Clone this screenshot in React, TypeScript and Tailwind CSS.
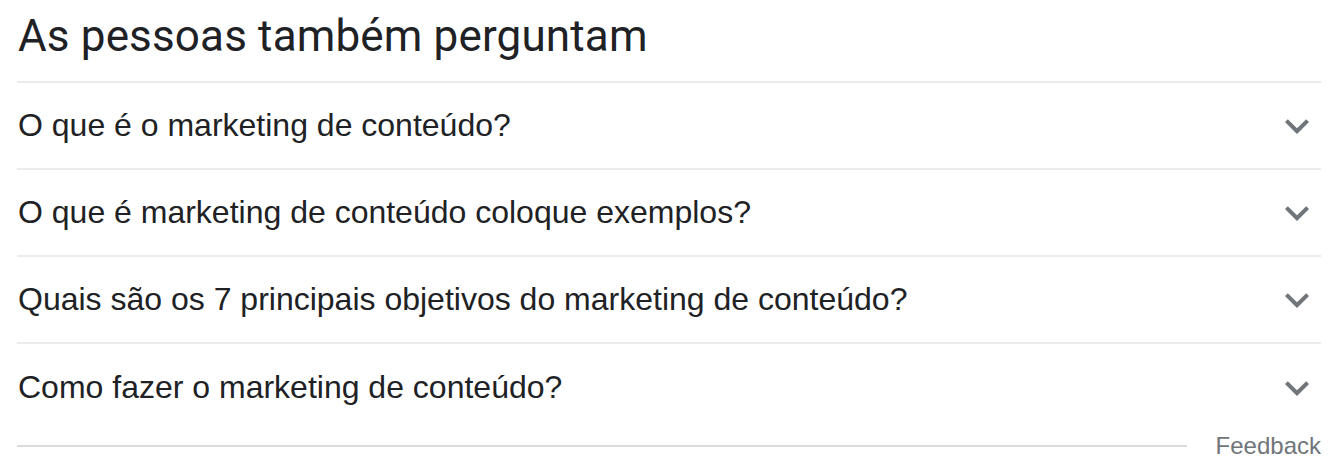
import React from "react";

const questions = [
  "O que é o marketing de conteúdo?",
  "O que é marketing de conteúdo coloque exemplos?",
  "Quais são os 7 principais objetivos do marketing de conteúdo?",
  "Como fazer o marketing de conteúdo?",
];

function Chevron() {
  return (
    <svg width="48" height="48" viewBox="0 0 24 24" className="fill-[#70757a] shrink-0">
      <path d="M16.59 8.59L12 13.17 7.41 8.59 6 10l6 6 6-6z" />
    </svg>
  );
}

export default function App() {
  return (
    <div className="bg-white w-[1340px] h-[471px] pl-[17px] pr-[19px] font-['Liberation_Sans',Arial,sans-serif]">
      <div className="h-[83px] border-b-2 border-[#ebebeb] flex items-start pt-[10px]">
        <h2 className="text-[44px] leading-[52px] tracking-[0.15px] text-[#202124] font-['Roboto',sans-serif] font-normal pl-[1px]">
          As pessoas também perguntam
        </h2>
      </div>
      {questions.map((q, i) => (
        <div
          key={i}
          className={`h-[87px] flex items-center justify-between ${i < 3 ? "border-b-2 border-[#ebebeb]" : ""}`}
        >
          <span className="text-[32px] leading-[40px] text-[#202124] pl-[1px] -mt-[2px]">{q}</span>
          <Chevron />
        </div>
      ))}
      <div className="h-[30px] flex items-center">
        <div className="flex-1 h-[2px] bg-[#dadce0]" />
        <span className="ml-[29px] text-[24px] leading-[30px] text-[#70757a] -mt-[1px]">Feedback</span>
      </div>
    </div>
  );
}
